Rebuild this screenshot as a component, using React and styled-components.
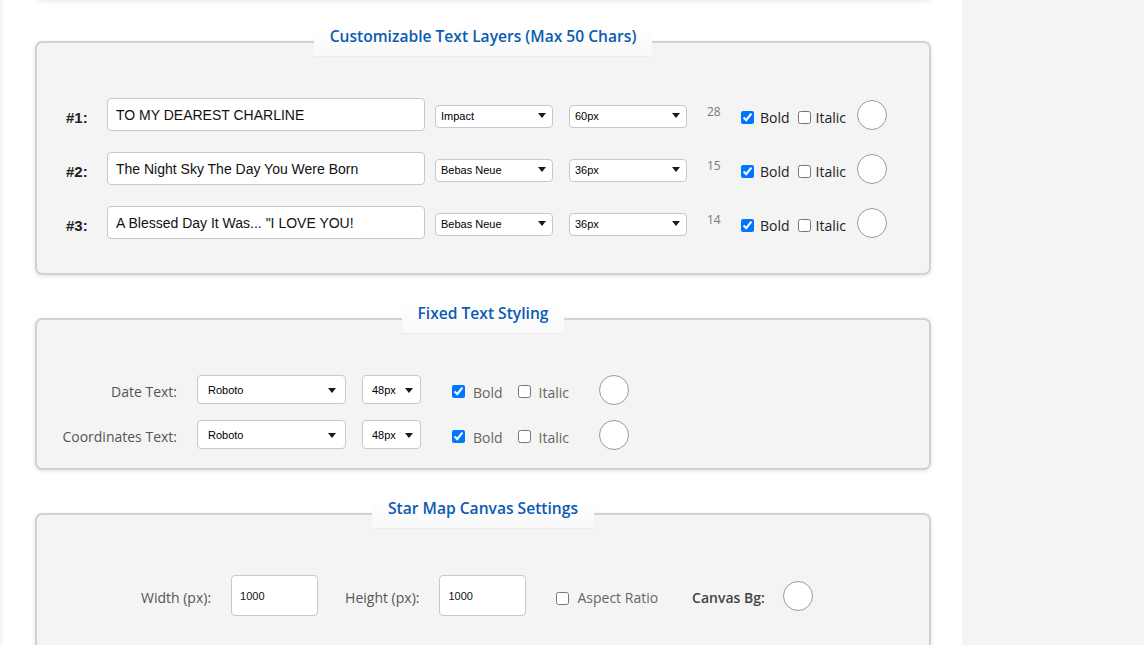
import React from "react";
import styled, { createGlobalStyle } from "styled-components";

const Global = createGlobalStyle`
  html, body { margin: 0; padding: 0; }
  body {
    background: #f3f4f6;
    font-family: "Open Sans", "Liberation Sans", Arial, sans-serif;
    overflow: hidden;
  }
`;

const Page = styled.div`
  width: 959px;
  margin-left: 3px;
  min-height: 645px;
  background: #fff;
  padding: 0 31px 0 32px;
  box-sizing: border-box;
`;

const TopCard = styled.div`
  height: 30px;
  margin-top: -31px;
  margin-bottom: 27px;
  background: #fff;
  border-radius: 6px;
  box-shadow: 0 2px 5px rgba(0, 0, 0, 0.1);
`;

const Fieldset = styled.fieldset`
  margin: 0 0 28px;
  padding: 0;
  border: 2px solid #d2d2d2;
  border-radius: 7px;
  background: #f4f4f4;
  box-shadow: 0 1px 4px rgba(0, 0, 0, 0.12);
  min-width: 0;
`;

const Legend = styled.legend`
  margin: 0 auto;
  padding: 0 16px 9px;
  font-family: "Open Sans", sans-serif;
  font-weight: 600;
  font-size: 15.6px;
  line-height: 21px;
  color: #0b5cb3;
  background: linear-gradient(#ffffff, #f9f9f9);
  border-bottom: 1px solid #ececec;
`;

const Body = styled.div`
  padding: ${(p) => p.$pad};
  display: flex;
  flex-direction: column;
  gap: ${(p) => p.$gap}px;
`;

const Row = styled.div`
  display: flex;
  align-items: center;
  height: ${(p) => p.$h}px;
  padding-left: ${(p) => p.$pl || 0}px;
`;

const NumLabel = styled.span`
  width: 41px;
  margin-left: 29px;
  font-family: "Liberation Sans", Arial, sans-serif;
  font-weight: bold;
  font-size: 15px;
  color: #222;
  padding-top: 5px;
`;

const TextInput = styled.input`
  box-sizing: border-box;
  width: ${(p) => p.$w}px;
  height: ${(p) => p.$h}px;
  margin: 0;
  padding: 0 8px;
  border: 1px solid #c8c8c8;
  border-radius: 4px;
  background: #fff;
  font-family: "Liberation Sans", Arial, sans-serif;
  font-size: ${(p) => p.$fs}px;
  color: #111;
  outline: none;
`;

const SelectWrap = styled.div`
  position: relative;
  margin-left: ${(p) => p.$ml}px;
  width: ${(p) => p.$w}px;
  height: ${(p) => p.$h}px;
  &::after {
    content: "";
    position: absolute;
    right: ${(p) => p.$ar}px;
    top: 50%;
    margin-top: -2px;
    border-left: 4px solid transparent;
    border-right: 4px solid transparent;
    border-top: 5px solid #1a1a1a;
    pointer-events: none;
  }
`;

const Select = styled.select`
  appearance: none;
  box-sizing: border-box;
  width: 100%;
  height: 100%;
  margin: 0;
  padding: 0 0 0 ${(p) => p.$pl}px;
  border: 1px solid #c8c8c8;
  border-radius: 4px;
  background: #fff;
  font-family: "Liberation Sans", Arial, sans-serif;
  font-size: 11px;
  color: #000;
  outline: none;
`;

const Count = styled.span`
  margin-left: 20px;
  width: 13px;
  font-size: 12px;
  color: #7a7a7a;
  margin-bottom: 6px;
`;

const Check = styled.input.attrs({ type: "checkbox" })`
  width: 13px;
  height: 13px;
  margin: 0 0 0 ${(p) => p.$ml}px;
  accent-color: #0075ff;
  flex: none;
  position: relative;
  top: ${(p) => p.$top || 0}px;
`;

const CheckText = styled.span`
  margin-left: ${(p) => p.$ml || 7}px;
  font-size: ${(p) => p.$fs || 14}px;
  color: ${(p) => p.$c};
  position: relative;
  top: ${(p) => p.$top || 0}px;
`;

const Swatch = styled.div`
  box-sizing: border-box;
  width: ${(p) => p.$d}px;
  height: ${(p) => p.$d}px;
  margin-left: ${(p) => p.$ml}px;
  border: 1px solid #9a9a9a;
  border-radius: 50%;
  background: #fff;
  flex: none;
`;

const FieldLabel = styled.span`
  width: ${(p) => (p.$w ? p.$w + "px" : "auto")};
  margin-left: ${(p) => p.$ml || 0}px;
  text-align: right;
  font-size: 14px;
  font-weight: ${(p) => (p.$strong ? 600 : 400)};
  color: ${(p) => p.$c || "#555"};
  position: relative;
  top: 2px;
  flex: none;
`;

const Spacer = styled.div`
  width: ${(p) => p.$w}px;
  flex: none;
`;

const layers = [
  { n: "#1:", text: "TO MY DEAREST CHARLINE", font: "Impact", size: "60px", count: 28 },
  { n: "#2:", text: "The Night Sky The Day You Were Born", font: "Bebas Neue", size: "36px", count: 15 },
  { n: "#3:", text: 'A Blessed Day It Was... "I LOVE YOU!', font: "Bebas Neue", size: "36px", count: 14 },
];

const fixed = [
  { label: "Date Text:" },
  { label: "Coordinates Text:" },
];

export default function App() {
  return (
    <>
      <Global />
      <Page>
        <TopCard />
        <Fieldset>
          <Legend>Customizable Text Layers (Max 50 Chars)</Legend>
          <Body $pad="41px 0 34px" $gap={21}>
            {layers.map((l) => (
              <Row key={l.n} $h={33}>
                <NumLabel>{l.n}</NumLabel>
                <TextInput $w={318} $h={33} $fs={14} defaultValue={l.text} />
                <SelectWrap $ml={10} $w={118} $h={23} $ar={7}>
                  <Select $pl={5} defaultValue={l.font}>
                    <option>{l.font}</option>
                  </Select>
                </SelectWrap>
                <SelectWrap $ml={16} $w={118} $h={23} $ar={7}>
                  <Select $pl={5} defaultValue={l.size}>
                    <option>{l.size}</option>
                  </Select>
                </SelectWrap>
                <Count>{l.count}</Count>
                <Check $ml={21} $top={3} defaultChecked />
                <CheckText $ml={6} $c="#222" $top={3}>Bold</CheckText>
                <Check $ml={8} $top={3} />
                <CheckText $ml={5} $c="#222" $top={3}>Italic</CheckText>
                <Swatch $d={30} $ml={11} />
              </Row>
            ))}
          </Body>
        </Fieldset>

        <Fieldset>
          <Legend>Fixed Text Styling</Legend>
          <Body $pad="41px 0 19px" $gap={16}>
            {fixed.map((f) => (
              <Row key={f.label} $h={29}>
                <FieldLabel $w={140}>{f.label}</FieldLabel>
                <SelectWrap $ml={20} $w={149} $h={29} $ar={10}>
                  <Select $pl={10} defaultValue="Roboto">
                    <option>Roboto</option>
                  </Select>
                </SelectWrap>
                <SelectWrap $ml={16} $w={59} $h={29} $ar={8}>
                  <Select $pl={9} defaultValue="48px">
                    <option>48px</option>
                  </Select>
                </SelectWrap>
                <Check $ml={31} $top={2} defaultChecked />
                <CheckText $ml={8} $c="#666" $top={3}>Bold</CheckText>
                <Check $ml={15} $top={2} />
                <CheckText $ml={8} $c="#666" $top={3}>Italic</CheckText>
                <Swatch $d={30} $ml={30} />
              </Row>
            ))}
          </Body>
        </Fieldset>

        <Fieldset>
          <Legend>Star Map Canvas Settings</Legend>
          <Body $pad="46px 0 59px" $gap={0}>
            <Row $h={41} $pl={104}>
              <FieldLabel>Width (px):</FieldLabel>
              <Spacer $w={20} />
              <TextInput $w={87} $h={41} $fs={11} defaultValue="1000" />
              <FieldLabel $ml={27}>Height (px):</FieldLabel>
              <Spacer $w={20} />
              <TextInput $w={87} $h={41} $fs={11} defaultValue="1000" />
              <Check $ml={30} $top={3} />
              <CheckText $ml={8} $c="#666" $top={2}>Aspect Ratio</CheckText>
              <FieldLabel $ml={34} $strong $c="#444">Canvas Bg:</FieldLabel>
              <Swatch $d={30} $ml={18} />
            </Row>
          </Body>
        </Fieldset>
      </Page>
    </>
  );
}
